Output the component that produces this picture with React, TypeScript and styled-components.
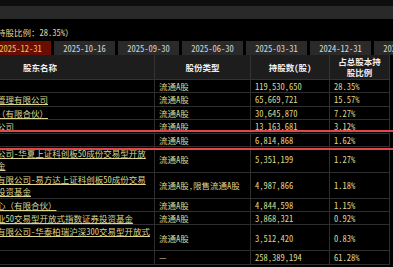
import React, { useLayoutEffect, useRef } from 'react';
import styled, { createGlobalStyle } from 'styled-components';

const GlobalStyle = createGlobalStyle`
  html, body { margin: 0; padding: 0; background: #000; }
  body {
    width: 393px;
    height: 267px;
    overflow: hidden;
    font-family: "Noto Sans Mono CJK SC", "Noto Sans CJK SC", "Liberation Mono", monospace;
    font-size: 8.5px;
  }
`;

const Viewport = styled.div`
  width: 393px;
  height: 267px;
  overflow: hidden;
  background: #000;
`;

const Sheet = styled.div`
  width: 560px;
  display: flex;
  flex-direction: column;
`;

const TopStrip = styled.div`
  height: 6px;
  background: #0e0e0e;
`;

const ToolBar = styled.div`
  height: 13px;
  background: #292929;
`;

const Summary = styled.div`
  height: 22px;
  box-sizing: border-box;
  padding: 7px 0 0 3px;
  line-height: 12px;
  color: #e2d79c;
  white-space: nowrap;
`;

const TabBar = styled.div`
  display: flex;
  gap: 3px;
  height: 14px;
  padding-left: 64px;
`;

const Tab = styled.div<{ $active?: boolean }>`
  flex: none;
  width: 61px;
  display: flex;
  align-items: center;
  justify-content: center;
  background: ${(p) => (p.$active ? '#6a0d02' : '#2a2a2a')};
  color: ${(p) => (p.$active ? '#f2c84a' : '#d6d6d6')};
  line-height: 14px;
`;

const Table = styled.div`
  display: flex;
  flex-direction: column;
  width: 464px;
`;

const cols = '229px 96px 79px 60px';

const HeaderRow = styled.div`
  display: grid;
  grid-template-columns: ${cols};
  height: 25px;
  background: #1d1d1d;
  border-bottom: 1px solid #333;
  box-sizing: border-box;
`;

const HeadCell = styled.div`
  display: flex;
  align-items: center;
  justify-content: center;
  text-align: center;
  font-weight: bold;
  color: #f1eef2;
  line-height: 11px;
  padding: 0 6px;
  border-right: 1px solid #333;
`;

const Row = styled.div<{ $marked?: boolean }>`
  position: relative;
  display: grid;
  grid-template-columns: ${cols};
  border-bottom: 1px solid #2e2e2e;
  background: #000;

  ${(p) =>
    p.$marked &&
    `
    &::before, &::after {
      content: '';
      position: absolute;
      left: 0;
      width: 600px;
      height: 2px;
      background: #e2474b;
      z-index: 2;
    }
    &::before { top: -4px; }
    &::after { bottom: -4px; }
  `}
`;

const Cell = styled.div`
  display: flex;
  align-items: center;
  padding: 0 3px 0 4px;
  line-height: 12.4px;
  color: #ddd58f;
  border-right: 1px solid #2e2e2e;
  overflow: hidden;
  white-space: nowrap;
`;

const NameCell = styled(Cell)`
  padding: 0 3px;
  white-space: normal;
  word-break: break-all;
`;

const NameLink = styled.span<{ $plain?: boolean }>`
  text-decoration: ${(p) => (p.$plain ? 'none' : 'underline')};
  text-underline-offset: 1px;
`;

type Holder = {
  name: string;
  type: string;
  shares: string;
  pct: string;
  marked?: boolean;
  total?: boolean;
};

const holders: Holder[] = [
  { name: '华芯集团公司', type: '流通A股', shares: '119,530,650', pct: '28.35%' },
  { name: '上海科创投资基金管理有限公司', type: '流通A股', shares: '65,669,721', pct: '15.57%' },
  { name: '上海国鑫投资中心（有限合伙）', type: '流通A股', shares: '30,645,870', pct: '7.27%' },
  { name: '香港中央结算有限公司', type: '流通A股', shares: '13,163,681', pct: '3.12%' },
  { name: '李明华', type: '流通A股', shares: '6,814,868', pct: '1.62%', marked: true },
  {
    name: '招商银行股份有限公司-华夏上证科创板50成份交易型开放式指数证券投资基金',
    type: '流通A股',
    shares: '5,351,199',
    pct: '1.27%',
  },
  {
    name: '中国工商银行股份有限公司-易方达上证科创板50成份交易型开放式指数证券投资基金',
    type: '流通A股,限售流通A股',
    shares: '4,987,866',
    pct: '1.18%',
  },
  { name: '深圳市创新投资中心（有限合伙）', type: '流通A股', shares: '4,844,598', pct: '1.15%' },
  {
    name: '易方达中证科创创业50交易型开放式指数证券投资基金',
    type: '流通A股',
    shares: '3,868,321',
    pct: '0.92%',
  },
  {
    name: '中国工商银行股份有限公司-华泰柏瑞沪深300交易型开放式指数证券投资基金',
    type: '流通A股',
    shares: '3,512,420',
    pct: '0.83%',
  },
  { name: '合计', type: '—', shares: '258,389,194', pct: '61.28%', total: true },
];

const tabs = ['2025-12-31', '2025-10-16', '2025-09-30', '2025-06-30', '2025-03-31', '2024-12-31', '2024-09-30'];

export default function App() {
  const ref = useRef<HTMLDivElement>(null);
  useLayoutEffect(() => {
    if (ref.current) ref.current.scrollLeft = 74;
  }, []);

  return (
    <>
      <GlobalStyle />
      <Viewport ref={ref}>
        <Sheet>
          <TopStrip />
          <ToolBar />
          <Summary>（第一大股东累计持股比例：28.35%）</Summary>
          <TabBar>
            {tabs.map((t, i) => (
              <Tab key={t} $active={i === 0}>
                {t}
              </Tab>
            ))}
          </TabBar>
          <Table>
            <HeaderRow>
              <HeadCell>股东名称</HeadCell>
              <HeadCell>股份类型</HeadCell>
              <HeadCell>持股数(股)</HeadCell>
              <HeadCell>占总股本持股比例</HeadCell>
            </HeaderRow>
            {holders.map((h) => (
              <Row key={h.name} $marked={h.marked}>
                <NameCell>
                  <NameLink $plain={h.total}>{h.name}</NameLink>
                </NameCell>
                <Cell>{h.type}</Cell>
                <Cell>{h.shares}</Cell>
                <Cell>{h.pct}</Cell>
              </Row>
            ))}
          </Table>
        </Sheet>
      </Viewport>
    </>
  );
}
